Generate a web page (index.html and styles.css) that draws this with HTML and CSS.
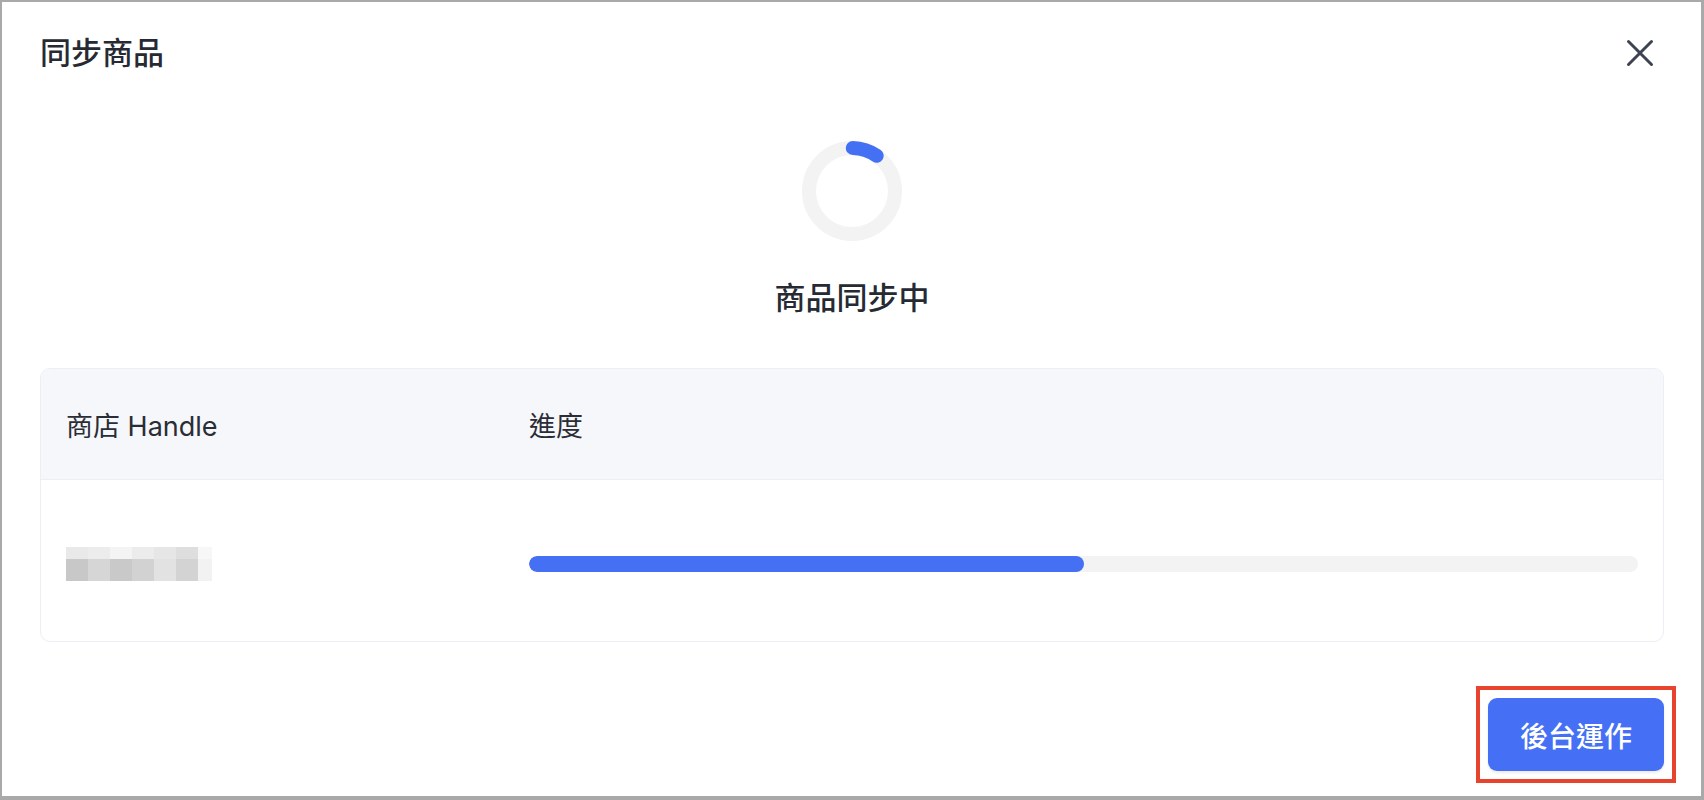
FILE: index.html
```html
<!DOCTYPE html>
<html lang="zh-Hant">
<head>
  <meta charset="UTF-8">
  <meta name="viewport" content="width=device-width, initial-scale=1.0">
  <title>同步商品</title>
  <link rel="stylesheet" href="styles.css">
</head>
<body>
  <div class="modal">
    <!-- Header -->
    <div class="modal-header">
      <h1>同步商品</h1>
      <button class="close-btn" title="關閉">
        <svg width="28" height="28" viewBox="0 0 28 28">
          <path d="M2.5 2.5 L25.5 25.5 M25.5 2.5 L2.5 25.5" stroke="#3d4350" stroke-width="3" stroke-linecap="round" fill="none"/>
        </svg>
      </button>
    </div>

    <!-- Status -->
    <div class="status">
      <svg class="spinner" width="100" height="100" viewBox="0 0 100 100">
        <circle cx="50" cy="50" r="43" stroke="#f3f3f3" stroke-width="14" fill="none"/>
        <circle cx="50" cy="50" r="43" stroke="#4470f4" stroke-width="14" fill="none"
          stroke-linecap="round" stroke-dasharray="25.5 300" transform="rotate(-89 50 50)"/>
      </svg>
      <h2>商品同步中</h2>
    </div>

    <!-- Table -->
    <div class="sync-table">
      <div class="row head">
        <div class="cell">商店 Handle</div>
        <div class="cell">進度</div>
      </div>
      <div class="row body">
        <div class="cell">
          <div class="mosaic">
            <span style="background:#e9e9e9"></span><span style="background:#ececec"></span><span style="background:#f4f4f4"></span><span style="background:#ececec"></span><span style="background:#e6e6e6"></span><span style="background:#dedede"></span><span style="background:#f7f7f7"></span>
            <span style="background:#c8c8c8"></span><span style="background:#d6d6d6"></span><span style="background:#c9c9c9"></span><span style="background:#d2d2d2"></span><span style="background:#e2e2e2"></span><span style="background:#d3d3d3"></span><span style="background:#f2f2f2"></span>
          </div>
        </div>
        <div class="cell">
          <div class="progress">
            <div class="progress-fill" style="width: 50%"></div>
          </div>
        </div>
      </div>
    </div>

    <!-- Footer -->
    <div class="modal-footer">
      <div class="highlight">
        <button class="primary-btn">後台運作</button>
      </div>
    </div>
  </div>
</body>
</html>
```

FILE: styles.css
```css
  body {
    font-family: Inter, "Noto Sans CJK TC", sans-serif;
    margin: 0;
    background-color: #a9a9a9;
    color: #272a33;
  }

  /* Modal */
  .modal {
    background-color: #ffffff;
    margin: 2px 3px 4px 2px;
    height: 794px;
    padding: 0 37px 0 38px;
    box-sizing: border-box;
    display: flex;
    flex-direction: column;
  }
  .modal-header {
    display: flex;
    justify-content: space-between;
    align-items: center;
    padding-top: 28px;
    height: 46px;
  }
  .modal-header h1 {
    margin: 0;
    font-size: 31px;
    font-weight: 500;
    line-height: 46px;
  }
  .close-btn {
    background: none;
    border: none;
    padding: 0;
    width: 32px;
    height: 32px;
    margin-right: 8px;
    display: flex;
    justify-content: center;
    align-items: center;
    cursor: pointer;
  }

  /* Status */
  .status {
    display: flex;
    flex-direction: column;
    align-items: center;
    margin-top: 65px;
  }
  .spinner {
    display: block;
  }
  .status h2 {
    margin: 35px 0 0;
    font-size: 31px;
    font-weight: 500;
    line-height: 44px;
    color: #262a33;
  }

  /* Table */
  .sync-table {
    margin-top: 48px;
    border: 1px solid #eceef3;
    border-radius: 10px;
    overflow: hidden;
  }
  .row {
    display: grid;
    grid-template-columns: 463px 1fr;
    align-items: center;
  }
  .row.head {
    height: 110px;
    background-color: #f6f7fb;
    border-bottom: 1px solid #eceef3;
    font-size: 27px;
    font-weight: 400;
    color: #2a2d36;
  }
  .row.body {
    height: 161px;
    padding-top: 6px;
    box-sizing: border-box;
  }
  .cell {
    padding: 0 25px;
  }
  .mosaic {
    display: grid;
    grid-template-columns: repeat(6, 22px) 14px;
    grid-template-rows: 12px 22px;
  }
  .progress {
    height: 16px;
    background-color: #f3f3f3;
    border-radius: 8px;
    overflow: hidden;
  }
  .progress-fill {
    height: 100%;
    background-color: #4670f3;
    border-radius: 8px;
  }

  /* Footer */
  .modal-footer {
    display: flex;
    justify-content: flex-end;
    margin-top: 44px;
  }
  .highlight {
    border: 4px solid #e8442d;
    padding: 8px;
    margin-right: -12px;
    display: flex;
  }
  .primary-btn {
    width: 176px;
    height: 73px;
    background-color: #4570f5;
    color: #ffffff;
    border: none;
    border-radius: 9px;
    font-family: inherit;
    font-size: 28px;
    font-weight: 500;
    box-shadow: 0 2px 3px rgba(0, 0, 0, 0.08);
    cursor: pointer;
  }
```
